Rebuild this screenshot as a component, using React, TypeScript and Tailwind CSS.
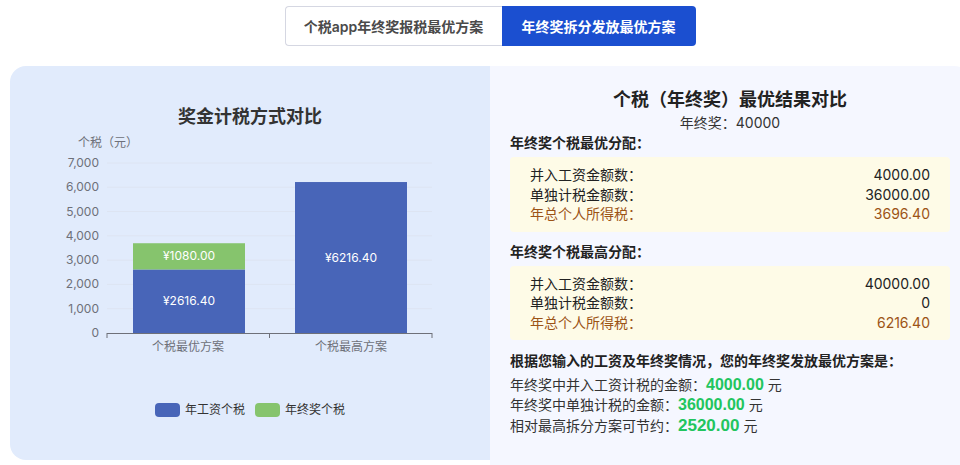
import React from "react";

const FONT = "Inter, 'Noto Sans CJK SC', sans-serif";
const NUM_FONT = "'Liberation Sans', 'Noto Sans CJK SC', sans-serif";

const yTicks = [0, 1000, 2000, 3000, 4000, 5000, 6000, 7000];
const ZERO = 203;
const UNIT = 170 / 7000;

function toY(v: number) {
  return ZERO - v * UNIT;
}

function Chart() {
  const salary1 = 2616.4;
  const bonus1 = 1080;
  const total2 = 6216.4;
  return (
    <svg width="480" height="300" viewBox="0 0 480 300" style={{ fontFamily: FONT }}>
      <text x="68" y="17" fontSize="12" fill="#6e7079">
        个税（元）
      </text>
      {yTicks.map((v) => (
        <g key={v}>
          {v > 0 && <line x1="97" x2="422" y1={toY(v)} y2={toY(v)} stroke="#dde4f2" strokeWidth="1" />}
          <text x="89" y={toY(v) + 4} fontSize="12" fill="#6e7079" textAnchor="end">
            {v.toLocaleString("en-US")}
          </text>
        </g>
      ))}

      {/* bar 1: stacked */}
      <rect x="123" y={toY(salary1)} width="112" height={salary1 * UNIT} fill="#4865b8" />
      <rect x="123" y={toY(salary1 + bonus1)} width="112" height={bonus1 * UNIT} fill="#86c46d" />
      <text x="179" y={toY(salary1 / 2) + 4} fontSize="12" fill="#fff" textAnchor="middle">
        ¥2616.40
      </text>
      <text x="179" y={toY(salary1 + bonus1 / 2) + 4} fontSize="12" fill="#fff" textAnchor="middle">
        ¥1080.00
      </text>

      {/* bar 2 */}
      <rect x="285" y={toY(total2)} width="112" height={total2 * UNIT} fill="#4865b8" />
      <text x="341" y={toY(total2 / 2) + 4} fontSize="12" fill="#fff" textAnchor="middle">
        ¥6216.40
      </text>

      {/* x axis */}
      <line x1="97" x2="422" y1={ZERO + 0.5} y2={ZERO + 0.5} stroke="#6e7079" />
      {[97, 259.5, 422].map((x) => (
        <line key={x} x1={x} x2={x} y1={ZERO} y2={ZERO + 5} stroke="#6e7079" />
      ))}
      <text x="178" y="221" fontSize="12" fill="#6e7079" textAnchor="middle">
        个税最优方案
      </text>
      <text x="341" y="221" fontSize="12" fill="#6e7079" textAnchor="middle">
        个税最高方案
      </text>

      {/* legend */}
      <rect x="145" y="273" width="25" height="14" rx="4" fill="#4865b8" />
      <text x="175" y="284" fontSize="12" fill="#333">
        年工资个税
      </text>
      <rect x="245" y="273" width="25" height="14" rx="4" fill="#86c46d" />
      <text x="275" y="284" fontSize="12" fill="#333">
        年终奖个税
      </text>
    </svg>
  );
}

interface Row {
  label: string;
  value: string;
  highlight?: boolean;
}

function ResultBox({ rows }: { rows: Row[] }) {
  return (
    <div className="mt-[4px] rounded-[4px] bg-[#fefbe7] px-5 pt-[8px] pb-[8px]">
      {rows.map((r) => (
        <div
          key={r.label}
          className={`flex justify-between leading-[19.5px] text-[14px] ${
            r.highlight ? "text-[#9c5316]" : "text-[#222]"
          }`}
        >
          <span>{r.label}</span>
          <span>{r.value}</span>
        </div>
      ))}
    </div>
  );
}

export default function App() {
  return (
    <div className="w-[960px] h-[465px] overflow-hidden bg-white" style={{ fontFamily: FONT }}>
      <div className="w-[980px] px-[10px] pt-[6px]">
        {/* tabs */}
        <div className="flex justify-center">
          <button className="h-[40px] w-[217px] rounded-l-[4px] border border-r-0 border-[#d5d7e2] bg-white text-[14px] font-semibold text-[#4a4a4a]">
            个税app年终奖报税最优方案
          </button>
          <button className="h-[40px] w-[194px] rounded-r-[4px] bg-[#1b4fd0] text-[14px] font-semibold text-white">
            年终奖拆分发放最优方案
          </button>
        </div>

        <div className="mt-[20px] flex items-start">
          {/* chart panel */}
          <div className="h-[394px] w-[480px] rounded-l-2xl bg-[#e1ebfc]">
            <h3 className="pt-[38px] text-center text-[18px] font-bold leading-[26px] text-[#333]">
              奖金计税方式对比
            </h3>
            <Chart />
          </div>

          {/* result panel */}
          <div className="w-[480px] rounded-r-2xl bg-[#f5f7ff] px-5 pt-[21px] pb-[40px] text-[#222]">
            <h3 className="text-center text-[18px] font-bold leading-[26px] text-[#222]">
              个税（年终奖）最优结果对比
            </h3>
            <p className="text-center text-[14px] leading-[20px] text-[#333]">年终奖：40000</p>

            <p className="text-[14px] font-semibold leading-[20px]">年终奖个税最优分配：</p>
            <ResultBox
              rows={[
                { label: "并入工资金额数：", value: "4000.00" },
                { label: "单独计税金额数：", value: "36000.00" },
                { label: "年总个人所得税：", value: "3696.40", highlight: true },
              ]}
            />

            <p className="mt-[10px] text-[14px] font-semibold leading-[20px]">年终奖个税最高分配：</p>
            <ResultBox
              rows={[
                { label: "并入工资金额数：", value: "40000.00" },
                { label: "单独计税金额数：", value: "0" },
                { label: "年总个人所得税：", value: "6216.40", highlight: true },
              ]}
            />

            <p className="mt-[11px] text-[14px] font-semibold leading-[20px]">
              根据您输入的工资及年终奖情况，您的年终奖发放最优方案是：
            </p>
            <div className="mt-[4px] text-[14px] text-[#333]">
              <p className="leading-[20px]">
                年终奖中并入工资计税的金额：
                <span className="text-[16px] font-bold text-[#22c55e]" style={{ fontFamily: NUM_FONT }}>
                  4000.00
                </span>{" "}
                元
              </p>
              <p className="leading-[20px]">
                年终奖中单独计税的金额：
                <span className="text-[16px] font-bold text-[#22c55e]" style={{ fontFamily: NUM_FONT }}>
                  36000.00
                </span>{" "}
                元
              </p>
              <p className="leading-[22px]">
                相对最高拆分方案可节约：
                <span className="text-[17px] font-bold text-[#22c55e]" style={{ fontFamily: NUM_FONT }}>
                  2520.00
                </span>{" "}
                元
              </p>
            </div>
          </div>
        </div>
      </div>
    </div>
  );
}
